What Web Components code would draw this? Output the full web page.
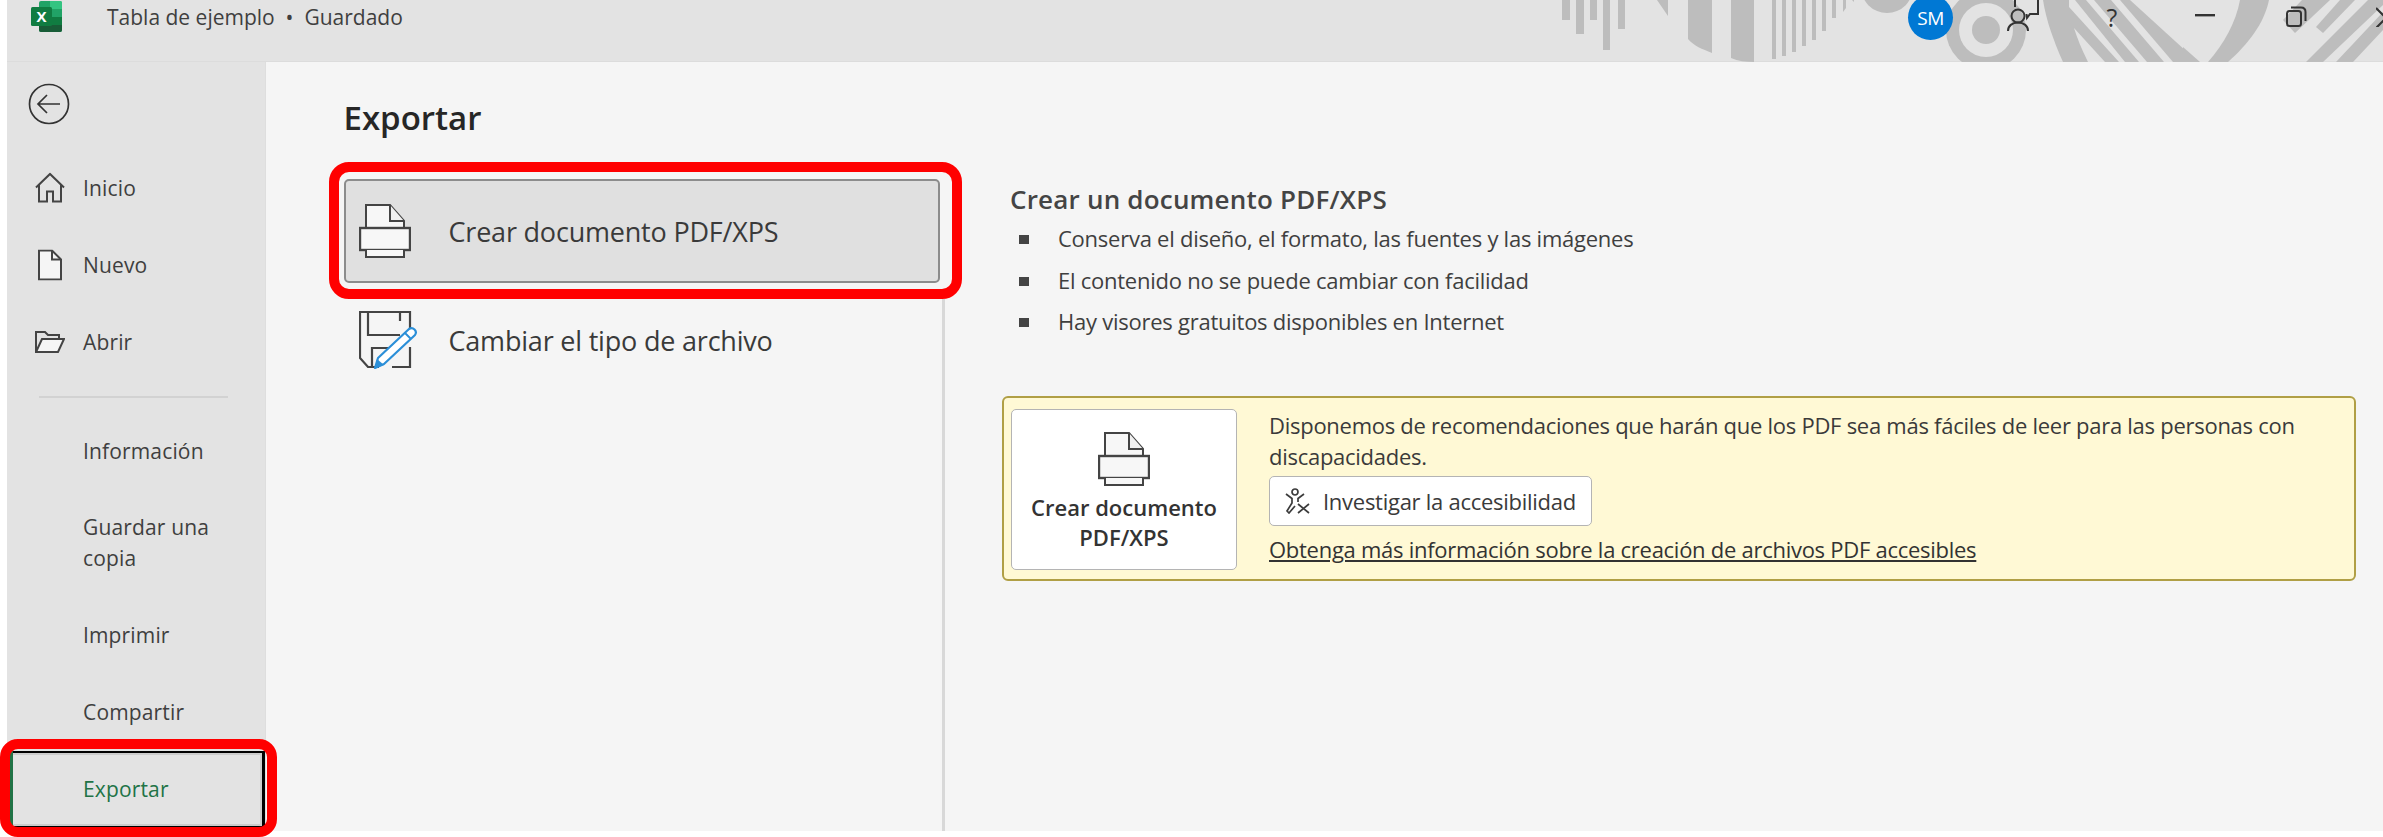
<!DOCTYPE html>
<html lang="es"><head><meta charset="utf-8"><title>Exportar</title>
<style>
html,body{margin:0;padding:0;background:#fff}
body{width:2383px;height:837px;overflow:hidden;font-family:"Open Sans","Noto Sans",sans-serif;color:#3b3b3b}
</style></head><body>
<x-app>
  <x-titlebar slot="top" doc="Tabla de ejemplo" status="Guardado"></x-titlebar>
  <x-nav slot="nav">
    <x-nav-item icon="home">Inicio</x-nav-item>
    <x-nav-item icon="new">Nuevo</x-nav-item>
    <x-nav-item icon="open">Abrir</x-nav-item>
    <x-nav-sep></x-nav-sep>
    <x-nav-item>Información</x-nav-item>
    <x-nav-item tall>Guardar una copia</x-nav-item>
    <x-nav-item>Imprimir</x-nav-item>
    <x-nav-item>Compartir</x-nav-item>
    <x-nav-item active>Exportar</x-nav-item>
  </x-nav>
  <x-export-panel slot="main" heading="Exportar">
    <x-option slot="options" icon="pdf" selected>Crear documento PDF/XPS</x-option>
    <x-option slot="options" icon="saveas">Cambiar el tipo de archivo</x-option>
    <x-detail slot="detail" heading="Crear un documento PDF/XPS">
      <li>Conserva el diseño, el formato, las fuentes y las imágenes</li>
      <li>El contenido no se puede cambiar con facilidad</li>
      <li>Hay visores gratuitos disponibles en Internet</li>
    </x-detail>
    <x-callout slot="detail"></x-callout>
  </x-export-panel>
</x-app>
<script>
const ICONS={
 pdf:(w,h)=>`<svg width="${w}" height="${h}" viewBox="0 0 52 54" fill="none" stroke="#444" stroke-width="2"><path d="M7 24V1H31L45 17V24" fill="#f7f7f7"/><path d="M31 1V17H45" fill="#f0f0f0"/><rect x="1" y="24" width="50" height="22" fill="#f7f7f7" stroke-width="2.4"/><path d="M7 46V53H45V46" fill="#f7f7f7"/></svg>`,
 saveas:(w,h)=>`<svg width="${w}" height="${h}" viewBox="0 0 58 58" fill="none"><path d="M51 20V1H1V47L9 56H20" stroke="#444" stroke-width="2.2"/><path d="M9 1V24H41" stroke="#444" stroke-width="2.2"/><path d="M41 1V10" stroke="#444" stroke-width="2.2"/><path d="M13 56V37H30" stroke="#444" stroke-width="2.2"/><path d="M51 36V56H33" stroke="#444" stroke-width="2.2"/><path d="M19 47L50 18Q53 16 55.500 18.500Q58 21 56 24L25 53L16 57Z" fill="#fff" stroke="#2b8fd8" stroke-width="2.200" stroke-linejoin="round"/><path d="M46 22L52 28" stroke="#2b8fd8" stroke-width="2"/><path d="M16 57L18 48L25 54Z" fill="#2b8fd8"/></svg>`,
 home:()=>`<svg width="30" height="31" viewBox="0 0 30 31" fill="none" stroke="#444" stroke-width="2"><path d="M1 15L15 1.500L29 15"/><path d="M4 12V29H12V19H18V29H26V12"/></svg>`,
 new:()=>`<svg width="24" height="31" viewBox="0 0 24 31" fill="#f5f5f5" stroke="#444" stroke-width="2"><path d="M1 1H14L23 10V30H1Z"/><path d="M14 1V10H23" fill="none"/></svg>`,
 open:()=>`<svg width="30" height="22" viewBox="0 0 30 22" fill="none" stroke="#444" stroke-width="2"><path d="M1 21V1H10L13 4H24V8"/><path d="M1 21L7 8H29L23 21Z" fill="#f5f5f5"/></svg>`,
 a11y:()=>`<svg width="26" height="26" viewBox="0 0 26 26" fill="none" stroke="#3c3c3c" stroke-width="1.700"><circle cx="11" cy="4" r="3"/><path d="M2 6L8 10.500L8 15L3 23L5 25L11 18"/><path d="M20 6L14 10.500V14"/><path d="M14 16L25 25M25 16L14 25"/></svg>`
};
function def(name,css,html,extra){
  const C=class extends HTMLElement{
    connectedCallback(){
      if(this.shadowRoot)return;
      const s=this.attachShadow({mode:'open'});
      s.innerHTML=`<style>${css}</style>`+(typeof html==='function'?html(this):html);
      if(extra)extra.call(this,s);
    }
  };
  customElements.define(name,C);
}
def('x-app',`
:host{display:grid;grid-template-columns:259px 1fr;grid-template-rows:62px 769px;margin-left:7px;background:#e3e3e3;position:relative;width:2376px}
.top{grid-column:1/3}
.mark{position:absolute;border:10px solid #f00;box-sizing:border-box;pointer-events:none}
.m1{left:322px;top:162px;width:633px;height:137px;border-radius:20px}
.m2{left:-7px;top:739px;width:277px;height:98px;border-radius:18px}
`,`<div class="top"><slot name="top"></slot></div><slot name="nav"></slot><slot name="main"></slot><div class="mark m1"></div><div class="mark m2"></div>`);

def('x-titlebar',`
:host{display:block;height:62px;position:relative;background:#e3e3e3;overflow:hidden;box-shadow:inset 0 -1px 0 #dcdcdc}
.bar{display:flex;align-items:flex-start;height:100%;position:relative}
.logo{margin:1px 0 0 24px;width:31px;height:31px;flex:none}
.title{margin-left:45px;font-size:21px;line-height:34px;color:#3f3f3f;white-space:pre}
.art{position:absolute;left:0;top:0}
.right{position:absolute;left:0;top:0;width:100%;height:100%}
.sm{position:absolute;left:1901px;top:-5px;width:45px;height:45px;border-radius:50%;background:#0078d4;color:#fff;font-size:19px;display:flex;align-items:center;justify-content:center;letter-spacing:-.5px}
.help{position:absolute;left:2095px;top:0;width:20px;font-size:25px;line-height:35px;color:#333;text-align:center}
`,h=>`<svg class="art" width="2376" height="62" viewBox="7 0 2376 62" fill="#bdbdbd">
<path d="M1562 0h8v20h-8zM1576 0h8v34h-8zM1590 0h7v20h-7zM1603 0h7v50h-7zM1618 0h7v29h-7z"/>
<path d="M1657 0h11v16z"/>
<path d="M1688 0h24v53C1702 49 1694 46 1688 39z"/>
<path d="M1731 0h23v62C1746 62 1738 61 1731 58z"/>
<path d="M1772 0h4v59h-4zM1782 0h4v56h-4zM1792 0h4v52h-4zM1802 0h4v46h-4zM1812 0h4v40h-4zM1822 0h4v31h-4zM1832 0h4v18h-4z"/>
<path d="M1843 0h3v8l-3 4zM1852 0h2v2z"/>
<circle cx="1887" cy="-13" r="26"/>
<circle cx="1986" cy="30" r="40"/><circle cx="1986" cy="30" r="27" fill="#e3e3e3"/><circle cx="1986" cy="30" r="14"/>
<path d="M2043 0L2269 0C2264 24 2248 44 2228 62H2063C2054 42 2046 20 2043 0Z"/>
<g fill="#e3e3e3">
<path d="M2074 28L2105 62H2088C2082 50 2077 38 2074 28Z"/>
<path d="M2069 0H2075L2125 62H2119L2069 7Z"/>
<path d="M2086 0H2094L2147 62H2139Z"/>
<path d="M2111 0H2120L2173 62H2164Z"/>
<path d="M2130 0H2240C2236 22 2224 44 2208 62H2198Z"/>
</g>
<path d="M2183 47L2200 62H2183Z"/>
<path d="M2283 20L2295 33L2330 0H2302Z"/>
<path d="M2316 27L2323 33L2355 0H2340Z"/>
<path d="M2306 62H2323L2383 5V-15Z"/>
<path d="M2336 62H2353L2383 30V12Z"/>
</svg>
<div class="bar">
<svg class="logo" viewBox="0 0 31 31"><rect x="8" y="0" width="23" height="31" rx="2" fill="#21a366"/><path d="M19 0h10a2 2 0 0 1 2 2v6H19z" fill="#33c481"/><path d="M19 8h12v8H19z" fill="#21a366"/><path d="M8 8h11v8H8zM19 16h12v8H19z" fill="#107c41"/><path d="M8 16h11v15H10a2 2 0 0 1-2-2z" fill="#185c37"/><path d="M19 24h12v5a2 2 0 0 1-2 2H19z" fill="#185c37"/><rect x="0" y="6" width="21" height="19" rx="1.500" fill="#107c41"/><text x="10.500" y="21" text-anchor="middle" font-family="Open Sans" font-weight="700" font-size="15" fill="#fff">X</text></svg>
<div class="title">${h.getAttribute('doc')}  •  ${h.getAttribute('status')}</div></div>
<div class="right"><div class="sm">SM</div>
<svg style="position:absolute;left:2000px;top:0" width="33" height="32" viewBox="0 0 33 32" fill="none" stroke="#333" stroke-width="2"><circle cx="11" cy="16" r="6.500"/><path d="M1 31C1 26 5 22.500 11 22.500C17 22.500 21 26 21 31"/><path d="M8 0V7M31 -1V14H23L20 18L19.500 14"/></svg>
<div class="help">?</div>
<svg style="position:absolute;left:2188px;top:14px" width="20" height="3"><rect width="20" height="2.400" fill="#333"/></svg>
<svg style="position:absolute;left:2279px;top:6px" width="21" height="21" viewBox="0 0 21 21" fill="none" stroke="#333" stroke-width="2"><rect x="1" y="5" width="14" height="15" rx="2.500"/><path d="M5 1.500H15C18 1.500 19.500 3 19.500 6V15"/></svg>
<svg style="position:absolute;left:2369px;top:6px" width="7" height="21" viewBox="0 0 7 21" fill="none" stroke="#333" stroke-width="2.200"><path d="M0 2L10 12L0 22"/></svg>
</div>`);

def('x-nav',`
:host{display:flex;flex-direction:column;background:#e3e3e3;height:769px;box-sizing:border-box;width:259px;border-right:1px solid #dedede}
.back{height:87.500px;flex:none;display:flex;align-items:flex-start;box-sizing:border-box;padding:21px 0 0 21px}
`,`<div class="back"><svg width="42" height="42" viewBox="0 0 42 42" fill="none" stroke="#333" stroke-width="1.700"><circle cx="21" cy="21" r="19.500"/><path d="M32 21H10M19 12L10 21L19 30"/></svg></div><slot></slot>`);

def('x-nav-item',`
:host{display:flex;align-items:center;height:77px;flex:none;position:relative;font-size:21px;line-height:31px;color:#3f3f3f;letter-spacing:.15px;box-sizing:border-box;padding-left:76px}
:host([tall]){height:107px}
:host([active]){color:#217346;border-left:3px solid #217346;margin-left:3px;padding-left:70px;margin-right:1px}
.ic{position:absolute;left:28px;top:50%;transform:translateY(-50%);display:flex;justify-content:center;width:30px}
.w{max-width:160px}
.blk{position:absolute;left:0;right:-1px;top:0;bottom:0;border-top:2px solid #000;border-bottom:2px solid #000;border-right:3px solid #000;box-shadow:inset 0 2px 0 #ccc,inset -2px 0 0 #ccc,inset 0 -2px 0 #ccc;pointer-events:none}
`,h=>{const ic=h.getAttribute('icon');return (ic?`<span class="ic">${ICONS[ic]()}</span>`:'')+`<span class="w"><slot></slot></span>`+(h.hasAttribute('active')?'<span class="blk"></span>':'')});

def('x-nav-sep',`:host{display:block;flex:none;height:2px;margin:15px 37px 15px 32px;background:#d2d2d2}`,'');

def('x-export-panel',`
:host{display:block;background:#f5f5f5;height:769px}
h1{margin:0;height:103px;box-sizing:border-box;padding:34px 0 0 77.500px;font-size:33px;line-height:44px;font-weight:600;color:#262626}
.cols{display:grid;grid-template-columns:679px 1fr;height:666px}
.l{padding-right:3px;background:linear-gradient(#d8d8d8,#d8d8d8) right 134px/3px 100% no-repeat;display:flex;flex-direction:column;gap:5px;padding-top:14px;box-sizing:border-box}
.r{padding:0 28px 0 57px;display:flex;flex-direction:column}
`,h=>`<h1>${h.getAttribute('heading')}</h1><div class="cols"><div class="l"><slot name="options"></slot></div><div class="r"><slot name="detail"></slot></div></div>`);

def('x-option',`
:host{display:flex;align-items:center;height:104px;flex:none;box-sizing:border-box;margin:0 3px 0 78px;width:596px;border:2px solid transparent;border-radius:5px;font-size:27px;letter-spacing:-.2px;color:#3a3a3a;padding-left:13px}
:host([selected]){background:#e0e0e0;border-color:#8c8c8c}
.i{width:58px;display:flex;flex:none;margin-right:31.500px}
`,h=>`<span class="i">${ICONS[h.getAttribute('icon')](h.getAttribute('icon')==='pdf'?52:58,h.getAttribute('icon')==='pdf'?54:58)}</span><span><slot></slot></span>`);

def('x-detail',`
:host{display:block;padding:16px 0 0 8px;height:231px;box-sizing:border-box}
h2{margin:0;font-size:26px;line-height:37px;font-weight:600;color:#444;letter-spacing:.2px}
ul{margin:0;padding:0;list-style:none;background-image:linear-gradient(#444,#444),linear-gradient(#444,#444),linear-gradient(#444,#444);background-size:10px 9px;background-repeat:no-repeat;background-position:9px 17px,9px 59px,9px 100px}
::slotted(li){display:block;font-size:22px;line-height:41.500px;letter-spacing:-.25px;color:#3f3f3f;padding-left:48px;list-style:none}
`,h=>`<h2>${h.getAttribute('heading')}</h2><ul><slot></slot></ul>`);

def('x-callout',`
:host{display:flex;width:1354px;height:185px;box-sizing:border-box;background:#fff9d5;border:2px solid #b09f45;border-radius:6px;padding:11px 0 0 7px;color:#3a3a3a;font-size:22px}
.big{width:226px;height:161px;background:#fff;border:1.500px solid #b4b4b4;border-radius:5px;box-sizing:border-box;display:flex;flex-direction:column;align-items:center;padding-top:22px;flex:none;font-weight:600;color:#333;line-height:30px;text-align:center;font-size:22px}
.big svg{margin-bottom:6px}
.txt{margin-left:32px;letter-spacing:-.27px;line-height:31px;width:1070px;margin-top:1px}
.txt p{margin:0}
.btn{display:inline-flex;align-items:center;height:50px;width:323px;box-sizing:border-box;margin-top:4px;background:#fff;border:1.500px solid #b4b4b4;border-radius:5px;padding-left:14px;gap:13px}
a{display:block;margin-top:8px;color:#333;text-decoration:underline}
`,`<div class="big">${ICONS.pdf(52,54)}<span>Crear documento<br>PDF/XPS</span></div>
<div class="txt"><p>Disponemos de recomendaciones que harán que los PDF sea más fáciles de leer para las personas con discapacidades.</p>
<div class="btn">${ICONS.a11y()}<span>Investigar la accesibilidad</span></div>
<a>Obtenga más información sobre la creación de archivos PDF accesibles</a></div>`);
</script>
</body></html>
